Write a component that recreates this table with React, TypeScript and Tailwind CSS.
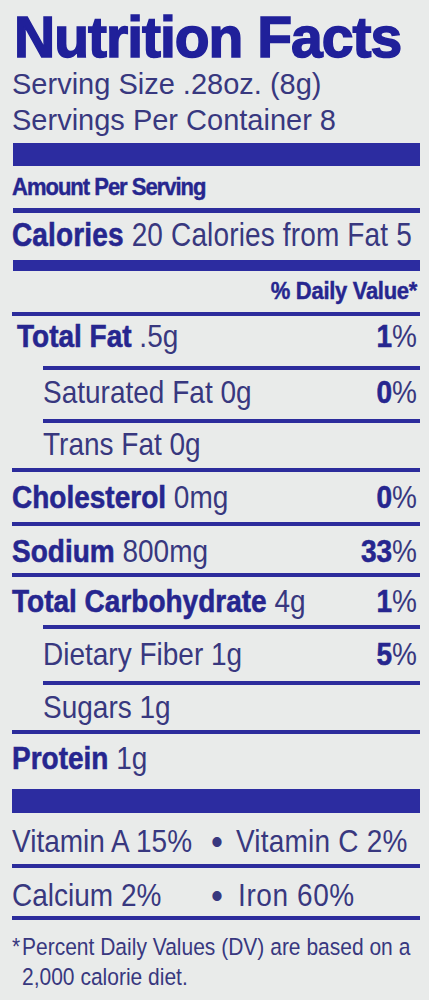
import React from 'react'

type RowProps = {
    cls: string
    left: React.ReactNode
    right?: React.ReactNode
    sub?: boolean
}

// rows are stretched a little in height to get the narrow, tall look of the printed label
const Row: React.FC<RowProps> = ({ cls, left, right, sub }) => (
    <div className={`flex items-start justify-between pr-[3px] text-[28px] whitespace-nowrap scale-y-[1.13] ${sub ? 'pl-[31px]' : ''} ${cls}`}>
        <span>{left}</span>
        {right && <span>{right}</span>}
    </div>
)

const Line: React.FC<{ sub?: boolean }> = ({ sub }) => (
    <div className={`h-[4px] bg-[#2c2c9c] ${sub ? 'ml-[31px]' : ''}`} />
)

const B: React.FC<{ children: React.ReactNode }> = ({ children }) => (
    <b className="font-bold text-[#26268f] [-webkit-text-stroke:0.5px_#26268f]">{children}</b>
)

const Pct: React.FC<{ n: string }> = ({ n }) => (
    <>
        <B>{n}</B>%
    </>
)

const App: React.FC = () => {
    return (
        <div className="min-h-screen w-full overflow-hidden bg-[#e9ebea] pl-[12px] pr-[9px] font-['Liberation_Sans',Arial,sans-serif] text-[#38387f]">
            <div className="h-[66px] pl-[2px] text-[57px] leading-[74px] font-bold tracking-[-1px] text-[#20209a] whitespace-nowrap [-webkit-text-stroke:1.5px_#20209a]">
                Nutrition Facts
            </div>
            <div className="h-[36px] text-[29px] leading-[37px] whitespace-nowrap scale-y-[1.03] origin-[0_29px]">Serving Size .28oz. (8g)</div>
            <div className="h-[36px] text-[29px] leading-[37px] whitespace-nowrap scale-y-[1.03] origin-[0_29px]">Servings Per Container 8</div>

            <div className="mt-[5px] ml-[1px] h-[23px] bg-[#2c2ca0]" />

            <div className="h-[42px] text-[22px] leading-[43px] font-bold tracking-[-1px] text-[#26268f] scale-y-[1.08] origin-[0_29px] [-webkit-text-stroke:0.4px_#26268f]">
                Amount Per Serving
            </div>
            <div className="ml-[1px] h-[5px] bg-[#2c2c9c]" />

            <Row cls="h-[47px] leading-[47px] origin-[0_33px] scale-y-[1.18] tracking-[0.15px]" left={<><B>Calories</B> 20 Calories from Fat 5</>} />

            <div className="ml-[1px] h-[11px] bg-[#2c2ca0]" />

            <div className="h-[41px] pr-[3px] text-right text-[22px] leading-[42px] font-bold tracking-[-0.3px] text-[#26268f] scale-y-[1.08] origin-[0_29px] [-webkit-text-stroke:0.4px_#26268f]">
                % Daily Value*
            </div>
            <Line />

            <Row cls="h-[50px] leading-[43px] pl-[5px] origin-[0_31px]" left={<><B>Total Fat</B> .5g</>} right={<Pct n="1" />} />
            <Line sub />
            <Row sub cls="h-[49px] leading-[47px] origin-[0_33px]" left="Saturated Fat 0g" right={<Pct n="0" />} />
            <Line sub />
            <Row sub cls="h-[45px] leading-[45px] origin-[0_32px]" left="Trans Fat 0g" />
            <Line />
            <Row cls="h-[50px] leading-[53px] origin-[0_36px]" left={<><B>Cholesterol</B> 0mg</>} right={<Pct n="0" />} />
            <Line />
            <Row cls="h-[47px] leading-[53px] origin-[0_36px]" left={<><B>Sodium</B> 800mg</>} right={<Pct n="33" />} />
            <Line />
            <Row cls="h-[48px] leading-[51px] origin-[0_35px]" left={<><B>Total Carbohydrate</B> 4g</>} right={<Pct n="1" />} />
            <Line sub />
            <Row sub cls="h-[52px] leading-[53px] origin-[0_36px]" left="Dietary Fiber 1g" right={<Pct n="5" />} />
            <Line sub />
            <Row sub cls="h-[45px] leading-[47px] origin-[0_33px]" left="Sugars 1g" />
            <Line />
            <Row cls="h-[55px] leading-[51px] origin-[0_35px]" left={<><B>Protein</B> 1g</>} />

            <div className="h-[24px] bg-[#2c2ca0]" />

            <div className="flex h-[51px] items-start text-[28px] leading-[59px] whitespace-nowrap scale-y-[1.1] origin-[0_39px]">
                <span className="w-[198px]">Vitamin A 15%</span>
                <span className="w-[14px] text-center text-[34px]">•</span>
                <span className="ml-[12px] tracking-[0.2px]">Vitamin C 2%</span>
            </div>
            <Line />
            <div className="flex h-[48px] items-start text-[28px] leading-[57px] whitespace-nowrap scale-y-[1.1] origin-[0_38px]">
                <span className="w-[198px]">Calcium 2%</span>
                <span className="w-[14px] text-center text-[34px]">•</span>
                <span className="ml-[14px] tracking-[0.6px]">Iron 60%</span>
            </div>
            <Line />

            <div className="flex pt-[14px] pb-[10px] text-[21px] leading-[27px] scale-y-[1.1] origin-[0_35px]">
                <span className="w-[10px] shrink-0">*</span>
                <span>Percent Daily Values (DV) are based on a 2,000 calorie diet.</span>
            </div>
        </div>
    )
}

export default App
